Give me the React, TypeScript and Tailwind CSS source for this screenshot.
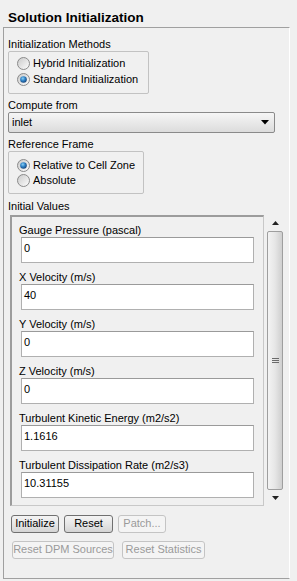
import React from "react";

const fields = [
  { label: "Gauge Pressure (pascal)", value: "0" },
  { label: "X Velocity (m/s)", value: "40" },
  { label: "Y Velocity (m/s)", value: "0" },
  { label: "Z Velocity (m/s)", value: "0" },
  { label: "Turbulent Kinetic Energy (m2/s2)", value: "1.1616" },
  { label: "Turbulent Dissipation Rate (m2/s3)", value: "10.31155" },
];

function Radio({ checked, label }: { checked?: boolean; label: string }) {
  return (
    <div className="flex items-center h-[16px] gap-[3px]">
      <svg width="13" height="13" viewBox="0 0 13 13">
        <defs>
          <linearGradient id="rbg" x1="0" y1="0" x2="1" y2="1">
            <stop offset="0" stopColor="#c8c8c8" />
            <stop offset="1" stopColor="#ffffff" />
          </linearGradient>
          <radialGradient id="rdot" cx="0.4" cy="0.35" r="0.7">
            <stop offset="0" stopColor="#8ad0f5" />
            <stop offset="0.5" stopColor="#2c7fc4" />
            <stop offset="1" stopColor="#173f72" />
          </radialGradient>
        </defs>
        <circle cx="6.5" cy="6.5" r="6" fill="url(#rbg)" stroke="#8b8b8b" strokeWidth="1" />
        {checked && <circle cx="6.5" cy="6.5" r="3.3" fill="url(#rdot)" />}
      </svg>
      <span>{label}</span>
    </div>
  );
}

function Button({ children, disabled, w }: { children: React.ReactNode; disabled?: boolean; w: string }) {
  return (
    <div
      className={
        disabled
          ? `${w} h-[18px] flex items-center justify-center rounded-[3px] border border-[#c4c4c4] bg-[#f4f4f4] text-[#9a9a9a]`
          : `${w} h-[18px] flex items-center justify-center rounded-[3px] border border-[#707070] bg-gradient-to-b from-[#f4f4f4] via-[#e6e6e6] to-[#d4d4d4] text-black`
      }
    >
      {children}
    </div>
  );
}

function Label({ children, className = "" }: { children: React.ReactNode; className?: string }) {
  return <div className={`h-[13px] leading-[13px] ${className}`}>{children}</div>;
}

export default function App() {
  return (
    <div className="w-[297px] h-[581px] bg-[#f0f0f0] text-[11px] text-black font-['Liberation_Sans',Arial,sans-serif] overflow-hidden">
      <div className="h-[27px] pl-[8px] pt-[10px] text-[13.5px] leading-4 font-bold">Solution Initialization</div>

      <div className="ml-[3px] w-[287px] h-[552px] border-t border-l border-b border-[#a0a0a0] border-r border-r-white pl-[4px]">
        <Label className="mt-[9.5px]">Initialization Methods</Label>
        <div className="w-[141px] h-[43px] rounded-[2px] border border-[#c2c2c2] pl-[8px] pt-[4px]">
          <Radio label="Hybrid  Initialization" />
          <Radio checked label="Standard Initialization" />
        </div>

        <Label className="mt-[5.5px]">Compute from</Label>
        <div className="w-[267px] h-[21px] rounded-[2px] border border-[#8a8a8a] bg-gradient-to-b from-[#f6f6f6] to-[#dcdcdc] flex items-center justify-between pl-[3px] pr-[5px]">
          <span>inlet</span>
          <svg width="8" height="5" viewBox="0 0 8 5">
            <path d="M0 0H8L4 4.5Z" fill="#000" />
          </svg>
        </div>

        <Label className="mt-[4.5px]">Reference Frame</Label>
        <div className="w-[136px] h-[43px] rounded-[2px] border border-[#c2c2c2] pl-[8px] pt-[6px]">
          <Radio checked label="Relative to Cell Zone" />
          <div className="-mt-[1px]">
            <Radio label="Absolute" />
          </div>
        </div>

        <Label className="mt-[6.5px]">Initial Values</Label>
        <div className="mt-[1.5px] flex gap-[3px] ml-[2px]">
          <div className="w-[254px] h-[291px] border-t-2 border-l-2 border-t-[#9c9c9c] border-l-[#9c9c9c] border-r border-b border-r-[#c8c8c8] border-b-[#c8c8c8] pl-[7px] pt-[7.5px]">
            {fields.map((f) => (
              <div key={f.label} className="mb-[8px]">
                <Label>{f.label}</Label>
                <div className="ml-[2px] w-[233px] h-[26px] border border-[#b0b0b0] border-t-[#9a9a9a] bg-white pl-[2px] pt-[4px] leading-[13px]">
                  {f.value}
                </div>
              </div>
            ))}
          </div>

          <div className="w-[16px] h-[291px] flex flex-col bg-[#f0f0f0]">
            <div className="h-[16px] flex items-center justify-center">
              <svg width="7" height="4" viewBox="0 0 7 4">
                <path d="M0 4H7L3.5 0Z" fill="#222" />
              </svg>
            </div>
            <div className="flex-1 rounded-[2px] border border-[#9e9e9e] bg-gradient-to-r from-[#f3f3f3] via-[#e6e6e6] to-[#cfcfcf] flex items-center justify-center">
              <svg width="7" height="7" viewBox="0 0 7 7">
                <path d="M0 1.5H7M0 3.5H7M0 5.5H7" stroke="#6a6a6a" strokeWidth="1" />
              </svg>
            </div>
            <div className="h-[16px] flex items-center justify-center">
              <svg width="7" height="4" viewBox="0 0 7 4">
                <path d="M0 0H7L3.5 4Z" fill="#222" />
              </svg>
            </div>
          </div>
        </div>

        <div className="mt-[9px] ml-[3px] flex gap-[5px]">
          <Button w="w-[48px]">Initialize</Button>
          <Button w="w-[49px]">Reset</Button>
          <Button disabled w="w-[48px]">Patch...</Button>
        </div>
        <div className="mt-[8px] ml-[4px] flex gap-[8px]">
          <Button disabled w="w-[102px]">Reset DPM Sources</Button>
          <Button disabled w="w-[83px]">Reset Statistics</Button>
        </div>
      </div>
    </div>
  );
}
